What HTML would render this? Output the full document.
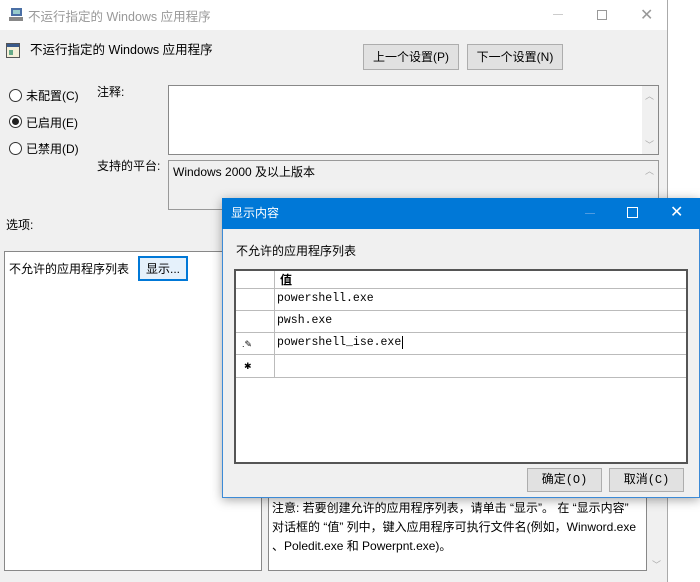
<!DOCTYPE html>
<html><head><meta charset="utf-8"><style>
*{margin:0;padding:0;box-sizing:border-box}
body{width:700px;height:582px;overflow:hidden;background:#fff;font-family:"Liberation Sans","Noto Sans CJK SC",sans-serif;font-size:12px;color:#000;position:relative}
.a{position:absolute;white-space:nowrap}
.btn{position:absolute;background:#e1e1e1;border:1px solid #adadad;text-align:center;font-size:12px}
.mono{font-family:"Liberation Mono","Noto Sans CJK SC",monospace;font-size:11.5px}
.rad{position:absolute;width:13px;height:13px;border:1px solid #333;border-radius:50%;background:#fff}
.arr{position:absolute;color:#aaa;font-size:9px}
</style></head><body>
<div class="a" style="left:0;top:0;width:668px;height:582px;background:#f0f0f0;border-right:1px solid #aaa"></div>
<div class="a" style="left:0;top:0;width:667px;height:30px;background:#fff"></div>
<svg class="a" style="left:9px;top:7px" width="16" height="16"><rect x="2" y="1" width="11" height="8" fill="#4a6fa5"/><rect x="4" y="3" width="7" height="4" fill="#9cc"/><rect x="0" y="10" width="14" height="4" fill="#888"/></svg>
<div class="a" style="left:28px;top:6px;color:#999;font-size:12.5px">不运行指定的 Windows 应用程序</div>
<div class="a" style="left:553px;top:14px;width:10px;height:1px;background:#ccc"></div>
<div class="a" style="left:597px;top:10px;width:10px;height:10px;border:1px solid #999"></div>
<div class="a" style="left:640px;top:5px;color:#999;font-size:16px">✕</div>

<svg class="a" style="left:6px;top:43px" width="16" height="16"><rect x="0.5" y="0.5" width="13" height="14" fill="#f4efd8" stroke="#555"/><rect x="1" y="1" width="12" height="3" fill="#3a5a8a"/><rect x="3" y="7" width="4" height="5" fill="#6a8"/></svg>
<div class="a" style="left:30px;top:39px;font-size:12.5px">不运行指定的 Windows 应用程序</div>
<div class="btn" style="left:363px;top:44px;width:96px;height:26px;line-height:24px">上一个设置(P)</div>
<div class="btn" style="left:467px;top:44px;width:96px;height:26px;line-height:24px">下一个设置(N)</div>

<div class="rad" style="left:9px;top:89px"></div><div class="a" style="left:26px;top:87px">未配置(C)</div>
<div class="rad" style="left:9px;top:115px"></div><div class="a" style="left:12px;top:118px;width:7px;height:7px;border-radius:50%;background:#222"></div><div class="a" style="left:26px;top:114px">已启用(E)</div>
<div class="rad" style="left:9px;top:142px"></div><div class="a" style="left:26px;top:140px">已禁用(D)</div>

<div class="a" style="left:97px;top:83px">注释:</div>
<div class="a" style="left:168px;top:85px;width:491px;height:70px;background:#fff;border:1px solid #888"></div>
<div class="a" style="left:642px;top:86px;width:16px;height:68px;background:#f0f0f0"></div>
<div class="arr" style="left:645px;top:89px">︿</div><div class="arr" style="left:645px;top:138px">﹀</div>
<div class="a" style="left:97px;top:157px">支持的平台:</div>
<div class="a" style="left:168px;top:160px;width:491px;height:50px;background:#f0f0f0;border:1px solid #999"></div>
<div class="a" style="left:173px;top:163px">Windows 2000 及以上版本</div>
<div class="arr" style="left:645px;top:164px">︿</div>

<div class="a" style="left:6px;top:216px">选项:</div>
<div class="a" style="left:4px;top:251px;width:258px;height:320px;background:#fff;border:1px solid #888"></div>
<div class="a" style="left:9px;top:260px">不允许的应用程序列表</div>
<div class="btn" style="left:138px;top:256px;width:50px;height:25px;line-height:22px;border:2px solid #0078d7;background:#e5f1fb">显示...</div>

<div class="a" style="left:268px;top:480px;width:379px;height:91px;background:#fff;border:1px solid #888"></div>
<div class="a" style="left:272px;top:499px;line-height:19px;font-size:12px">注意: 若要创建允许的应用程序列表，请单击 “显示”。 在 “显示内容”<br>对话框的 “值” 列中，键入应用程序可执行文件名(例如，Winword.exe<br>、Poledit.exe 和 Powerpnt.exe)。</div>
<div class="arr" style="left:652px;top:558px">﹀</div>

<!-- dialog -->
<div class="a" style="left:222px;top:198px;width:478px;height:300px;background:#f0f0f0;border:1px solid #3c8ad6;box-shadow:0 2px 10px rgba(0,0,0,.35)"></div>
<div class="a" style="left:222px;top:198px;width:478px;height:31px;background:#0078d7"></div>
<div class="a" style="left:231px;top:204px;color:#fff">显示内容</div>
<div class="a" style="left:585px;top:213px;width:10px;height:1px;background:#4f9be0"></div>
<div class="a" style="left:627px;top:207px;width:11px;height:11px;border:1px solid #fff"></div>
<div class="a" style="left:670px;top:202px;color:#fff;font-size:16px">✕</div>
<div class="a" style="left:236px;top:242px">不允许的应用程序列表</div>
<div class="a" style="left:234px;top:269px;width:454px;height:195px;background:#fff;border:2px solid #555"></div>
<div class="a" style="left:274px;top:271px;width:1px;height:106px;background:#bbb"></div>
<div class="a" style="left:236px;top:288px;width:450px;height:1px;background:#bbb"></div>
<div class="a" style="left:236px;top:310px;width:450px;height:1px;background:#bbb"></div>
<div class="a" style="left:236px;top:332px;width:450px;height:1px;background:#bbb"></div>
<div class="a" style="left:236px;top:354px;width:450px;height:1px;background:#bbb"></div>
<div class="a" style="left:236px;top:377px;width:450px;height:1px;background:#bbb"></div>
<div class="a" style="left:280px;top:271px;font-weight:bold">值</div>
<div class="a mono" style="left:277px;top:292px">powershell.exe</div>
<div class="a mono" style="left:277px;top:314px">pwsh.exe</div>
<div class="a mono" style="left:277px;top:336px">powershell_ise.exe<span style="border-left:1px solid #000;margin-left:1px"></span></div>
<div class="a" style="left:242px;top:339px;font-size:9px">.✎</div>
<div class="a" style="left:244px;top:361px;font-size:9px">✱</div>
<div class="btn mono" style="left:527px;top:468px;width:75px;height:24px;line-height:22px;font-size:12px">确定(O)</div>
<div class="btn mono" style="left:609px;top:468px;width:75px;height:24px;line-height:22px;font-size:12px">取消(C)</div>
</body></html>
